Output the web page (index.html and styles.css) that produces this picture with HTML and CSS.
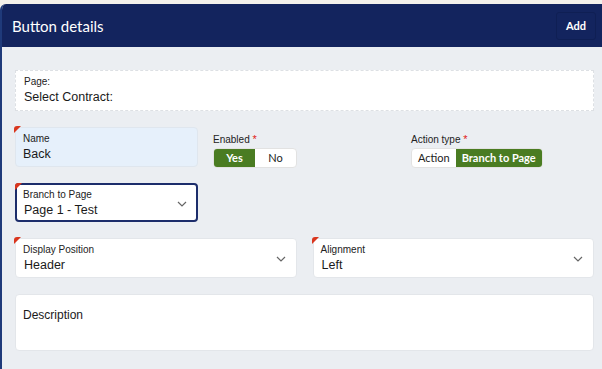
FILE: index.html
```html
<!DOCTYPE html>
<html lang="en">
<head>
    <meta charset="UTF-8">
    <meta name="viewport" content="width=device-width, initial-scale=1.0">
    <title>Button details</title>
    <link rel="stylesheet" href="styles.css">
</head>
<body>

    <div class="panel">
        <div class="panel-header">
            <h1>Button details</h1>
            <button class="add-btn">Add</button>
        </div>

        <div class="panel-body">
            <div class="page-card">
                <div class="label">Page:</div>
                <div class="value">Select Contract:</div>
            </div>

            <div class="grid-3">
                <div class="field field-name required">
                    <div class="label">Name</div>
                    <div class="value">Back</div>
                </div>
                <div class="toggle-field">
                    <div class="label">Enabled <span class="star">*</span></div>
                    <div class="toggle">
                        <span class="opt on">Yes</span>
                        <span class="opt">No</span>
                    </div>
                </div>
                <div class="toggle-field">
                    <div class="label">Action type <span class="star">*</span></div>
                    <div class="toggle">
                        <span class="opt">Action</span>
                        <span class="opt on">Branch to Page</span>
                    </div>
                </div>
            </div>

            <div class="grid-3">
                <div class="field select focused required">
                    <div class="label">Branch to Page</div>
                    <div class="value">Page 1 - Test</div>
                    <svg class="chevron" width="10" height="6" viewBox="0 0 10 6"><path d="M1 1l4 4 4-4" fill="none" stroke="#666" stroke-width="1.2"/></svg>
                </div>
            </div>

            <div class="grid-2">
                <div class="field select required">
                    <div class="label">Display Position</div>
                    <div class="value">Header</div>
                    <svg class="chevron" width="10" height="6" viewBox="0 0 10 6"><path d="M1 1l4 4 4-4" fill="none" stroke="#666" stroke-width="1.2"/></svg>
                </div>
                <div class="field select required">
                    <div class="label">Alignment</div>
                    <div class="value">Left</div>
                    <svg class="chevron" width="10" height="6" viewBox="0 0 10 6"><path d="M1 1l4 4 4-4" fill="none" stroke="#666" stroke-width="1.2"/></svg>
                </div>
            </div>

            <div class="description">Description</div>
        </div>
    </div>

</body>
</html>
```

FILE: styles.css
```css
body {
    margin: 0;
    padding-top: 4px;
    background-color: #f4f1ec;
    font-family: "Liberation Sans", Arial, sans-serif;
    color: #1a1a1a;
}
.panel {
    background-color: #ebeef2;
    border-left: 2px solid #1f3a7a;
    border-top-left-radius: 6px;
    height: 365px;
    overflow: hidden;
}
.panel-header {
    background-color: #13245e;
    height: 43px;
    display: flex;
    align-items: center;
    justify-content: space-between;
    padding: 0 6px 0 10px;
}
.panel-header h1 {
    margin: 0;
    color: white;
    font-family: Lato, sans-serif;
    font-weight: 400;
    font-size: 15px;
}
.add-btn {
    background: transparent;
    color: white;
    border: 1px solid #0f1f54;
    border-radius: 3px;
    font-family: Lato, sans-serif;
    font-weight: 700;
    font-size: 11px;
    width: 40px;
    height: 28px;
    padding: 0;
}
.panel-body {
    padding: 23px 8px 0 13px;
    display: flex;
    flex-direction: column;
    gap: 16px;
}
.label {
    font-size: 10px;
    color: #222;
}
.value {
    font-size: 12.5px;
    margin-top: 3px;
}
.page-card {
    background: white;
    border: 1px dashed #dde0e4;
    height: 41px;
    box-sizing: border-box;
    padding: 5px 8px;
}
.grid-3 {
    display: grid;
    grid-template-columns: repeat(3, 1fr);
    gap: 15px;
}
.grid-2 {
    display: grid;
    grid-template-columns: 1fr 1fr;
    gap: 16px;
}
.field {
    position: relative;
    background: white;
    border: 1px solid #e3e6ea;
    border-radius: 4px;
    height: 40px;
    box-sizing: border-box;
    padding: 5px 7px;
}
.field-name {
    background: #e6f0fb;
    border-color: #dfe6ee;
}
.required::before {
    content: "";
    position: absolute;
    top: -2px;
    left: -2px;
    border-top: 7px solid #d9361e;
    border-right: 7px solid transparent;
    border-top-left-radius: 3px;
}
.select .value {
    margin-left: 1px;
}
.focused {
    border: 2px solid #1c2d6b;
    padding: 4px 6px;
    height: 39px;
}
.chevron {
    position: absolute;
    right: 10px;
    top: 17px;
}
.focused .chevron {
    right: 9px;
    top: 16px;
}
.toggle-field {
    height: 40px;
}
.toggle-field .label {
    margin-top: 6px;
    font-size: 10px;
    line-height: 12px;
}
.star {
    color: #e02020;
    font-size: 11px;
}
.toggle {
    display: inline-flex;
    margin-top: 2px;
    border: 1px solid #e2e2e2;
    border-radius: 4px;
    overflow: hidden;
    background: white;
}
.opt {
    font-family: Lato, sans-serif;
    font-size: 11px;
    padding: 2px 6px;
    height: 14px;
    line-height: 14px;
    color: #222;
    min-width: 29px;
    text-align: center;
}
.opt.on {
    background: #4a7c22;
    color: white;
    font-weight: 700;
}
.description {
    background: white;
    border: 1px solid #e3e6ea;
    border-radius: 4px;
    height: 57px;
    box-sizing: border-box;
    padding: 13px 7px;
    font-size: 12px;
}
```
